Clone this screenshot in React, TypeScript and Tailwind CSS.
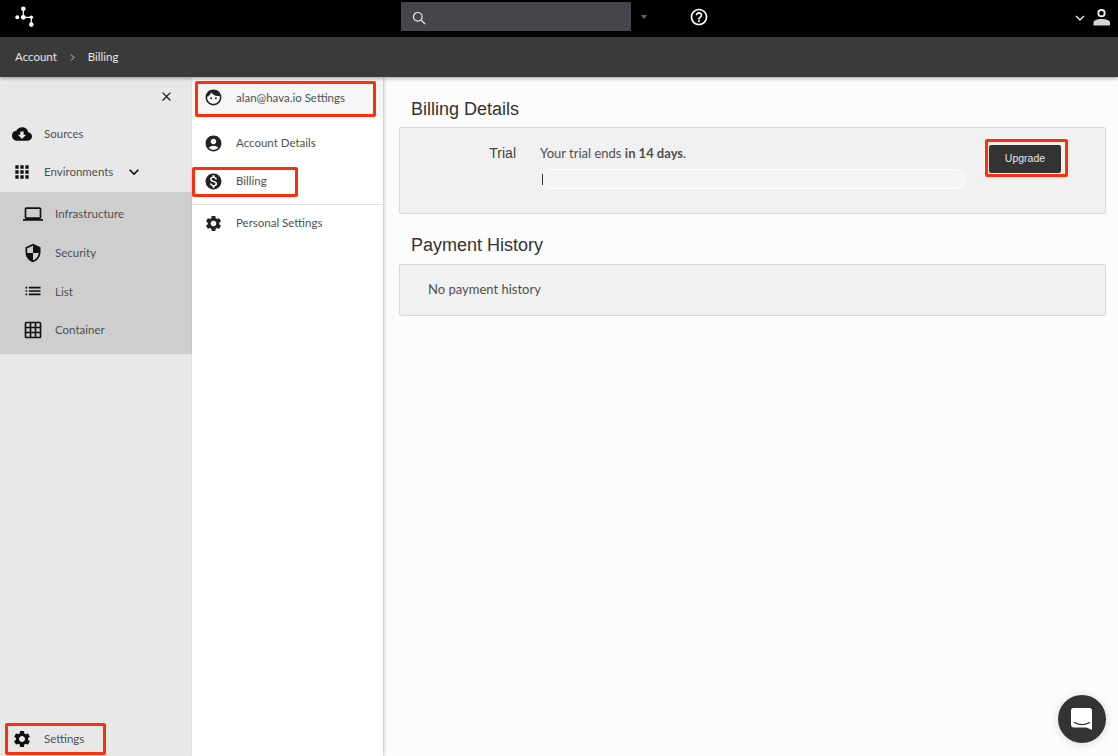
import React from "react";
import {
  MdAccountCircle,
  MdApps,
  MdClose,
  MdCloudDownload,
  MdExpandMore,
  MdFace,
  MdGridOn,
  MdHelpOutline,
  MdLaptop,
  MdList,
  MdMonetizationOn,
  MdSecurity,
  MdSettings,
} from "react-icons/md";

const subItems = [
  { label: "Infrastructure", icon: MdLaptop },
  { label: "Security", icon: MdSecurity },
  { label: "List", icon: MdList },
  { label: "Container", icon: MdGridOn },
];

const Logo = () => (
  <svg width="20" height="22" viewBox="0 0 20 22" fill="#fff">
    <path d="M9.300 2.700V11.300H17.300V18.600" stroke="#fff" strokeWidth="1.200" fill="none" />
    <circle cx="3.300" cy="11.300" r="2" />
    <circle cx="9.300" cy="2.700" r="2.300" />
    <circle cx="9.300" cy="11.300" r="2.400" />
    <circle cx="17.300" cy="11.200" r="1.800" />
    <circle cx="17.300" cy="18.600" r="2.300" />
  </svg>
);

const UserIcon = () => (
  <svg width="18" height="17" viewBox="0 0 18 17">
    <circle cx="8.500" cy="4.200" r="3.200" fill="none" stroke="#eee" strokeWidth="1.800" />
    <path d="M0.500 16.500V13.500C0.500 11.500 4 10 8.500 10S17 11.500 17 13.500V16.500Z" fill="#d4d4d4" />
  </svg>
);

const RedBox = ({ className }: { className: string }) => (
  <div className={`pointer-events-none absolute z-20 rounded-[2px] border-[3px] border-[#fd2e0b] ${className}`} />
);

const App = () => {
  return (
    <div className="relative flex h-[756px] w-[1118px] flex-col overflow-hidden bg-[#fcfcfc] font-['Lato','Noto_Sans',sans-serif] text-[#505050]">
      {/* top bar */}
      <header className="relative flex h-[37px] shrink-0 items-center bg-black pb-[4px] text-white">
        <div className="ml-[14px] w-[387px]">
          <Logo />
        </div>
        <div className="flex h-[29px] w-[230px] items-center bg-[#44464c] pl-[11px]">
          <svg width="14" height="14" viewBox="0 0 14 14" fill="none" stroke="#e8e8e8" strokeWidth="1.200" className="mt-[3px]">
            <circle cx="5.800" cy="5.800" r="4.300" />
            <path d="M9 9l4 4" />
          </svg>
        </div>
        <div className="ml-[10px] h-0 w-0 border-x-[3.5px] border-t-[4px] border-x-transparent border-t-[#666]" />
        <MdHelpOutline className="ml-[42px] text-[20px]" />
        <div className="ml-auto mr-[7px] mt-[2px] flex items-center gap-[8px]">
          <svg width="10" height="6" viewBox="0 0 10 6" fill="none" stroke="#eee" strokeWidth="1.300" className="mt-[1px]">
            <path d="M1 1l4 4 4-4" />
          </svg>
          <UserIcon />
        </div>
      </header>

      {/* breadcrumb */}
      <div className="z-10 flex h-[40px] shrink-0 items-center bg-[#3a3a3a] pl-[15px] text-[11.5px] text-[#e6e6e6] shadow-[0_1px_4px_rgba(0,0,0,0.4)]">
        <span>Account</span>
        <svg width="5" height="7" viewBox="0 0 5 7" fill="none" stroke="#ddd" strokeWidth="0.900" className="mx-[13px]">
          <path d="M1 0.500l3 3-3 3" />
        </svg>
        <span>Billing</span>
      </div>

      <div className="flex min-h-0 flex-1">
        {/* sidebar */}
        <aside className="flex w-[192px] shrink-0 flex-col bg-[#e8e8e8] text-[11.5px]">
          <div className="flex h-[38px] items-center justify-end pr-[18px] pt-[1px]">
            <MdClose className="text-[15px] text-[#222]" />
          </div>
          <div className="flex h-[38px] items-center pl-[12px]">
            <MdCloudDownload className="text-[20px] text-[#111]" />
            <span className="ml-[12px]">Sources</span>
          </div>
          <div className="flex h-[38px] items-center pl-[12px]">
            <MdApps className="text-[20px] text-[#111]" />
            <span className="ml-[12px]">Environments</span>
            <MdExpandMore className="ml-[11px] text-[20px] text-[#111]" />
          </div>
          <div className="mt-[1px] flex h-[162px] flex-col bg-[#cecece] pt-[2.5px]">
            {subItems.map((item) => (
              <div key={item.label} className="flex h-[38.7px] items-center pl-[23px]">
                <item.icon className="text-[20px] text-[#111]" />
                <span className="ml-[12px]">{item.label}</span>
              </div>
            ))}
          </div>
          <div className="mb-0 mt-auto flex h-[34px] items-center pl-[12px]">
            <MdSettings className="text-[20px] text-[#111]" />
            <span className="ml-[12px]">Settings</span>
          </div>
        </aside>

        {/* settings menu */}
        <nav className="z-[5] flex w-[191px] shrink-0 flex-col bg-white text-[11.5px] shadow-[1px_0_3px_rgba(0,0,0,0.25)]">
          <div className="flex h-[40px] items-center bg-[#f6f6f6] pl-[12px]">
            <MdFace className="text-[19px] text-[#222]" />
            <span className="ml-[13px] mt-px">alan@hava.io Settings</span>
          </div>
          <div className="mt-[7px] flex h-[38px] items-center pl-[12px]">
            <MdAccountCircle className="text-[19px] text-[#222]" />
            <span className="ml-[13px]">Account Details</span>
          </div>
          <div className="flex h-[38px] items-center pl-[12px]">
            <MdMonetizationOn className="text-[19px] text-[#222]" />
            <span className="ml-[13px]">Billing</span>
          </div>
          <div className="mt-[4px] flex h-[37px] items-center border-t border-[#dedede] pl-[12px]">
            <MdSettings className="text-[19px] text-[#222]" />
            <span className="ml-[13px]">Personal Settings</span>
          </div>
        </nav>

        {/* main */}
        <main className="min-w-0 flex-1 pl-[16px] pr-[12px] font-['Liberation_Sans',sans-serif]">
          <h2 className="ml-[12px] mt-[22px] text-[18px] leading-[21px] text-[#333]">Billing Details</h2>
          <section className="mt-[7px] flex h-[87px] rounded-[2px] border border-[#d9d9d9] bg-[#f1f1f1]">
            <div className="w-[116px] pt-[17px] text-right text-[14px] leading-[16px] text-[#444]">Trial</div>
            <div className="ml-[24px] w-[425px] pt-[17px] font-['Lato',sans-serif]">
              <p className="text-[13px] leading-[16px] text-[#505050]">
                Your trial ends <b className="font-bold">in 14 days</b>.
              </p>
              <div className="ml-px mt-[8px] flex h-[20px] items-center rounded-full border border-white bg-[#f4f4f4]">
                <div className="h-[11px] w-px bg-[#333]" />
              </div>
            </div>
            <button type="button" className="ml-[24px] mt-[17px] h-[28px] w-[72px] rounded-[2px] bg-[#333] text-[10.5px] text-[#e8e8e8]">
              Upgrade
            </button>
          </section>

          <h2 className="ml-[12px] mt-[21px] text-[18px] leading-[21px] text-[#333]">Payment History</h2>
          <section className="mt-[8px] flex h-[52px] items-center rounded-[2px] border border-[#d9d9d9] bg-[#f1f1f1] pl-[28px] font-['Lato',sans-serif] text-[13px] text-[#505050]">
            No payment history
          </section>
        </main>
      </div>

      {/* annotations */}
      <RedBox className="left-[195px] top-[81px] h-[36px] w-[181px]" />
      <RedBox className="left-[192px] top-[167px] h-[30px] w-[106px]" />
      <RedBox className="left-[5px] top-[723px] h-[32px] w-[101px]" />
      <RedBox className="left-[985px] top-[139px] h-[38px] w-[83px]" />

      {/* chat bubble */}
      <div className="absolute left-[1058px] top-[695px] z-20 flex h-[48px] w-[48px] items-center justify-center rounded-full bg-[#333] shadow-[0_1px_8px_rgba(0,0,0,0.15)]">
        <svg width="22" height="24" viewBox="0 0 22 24">
          <path d="M2.500 1h16A2.500 2.500 0 0 1 21 3.500V23l-5.500-2.600H2.500A2.500 2.500 0 0 1 0 18V3.500A2.500 2.500 0 0 1 2.500 1z" fill="#fff" />
          <path d="M3.500 15.500c4.500 2.600 10.500 2.600 15 0" fill="none" stroke="#333" strokeWidth="1.400" strokeLinecap="round" />
        </svg>
      </div>
    </div>
  );
};

export default App;
